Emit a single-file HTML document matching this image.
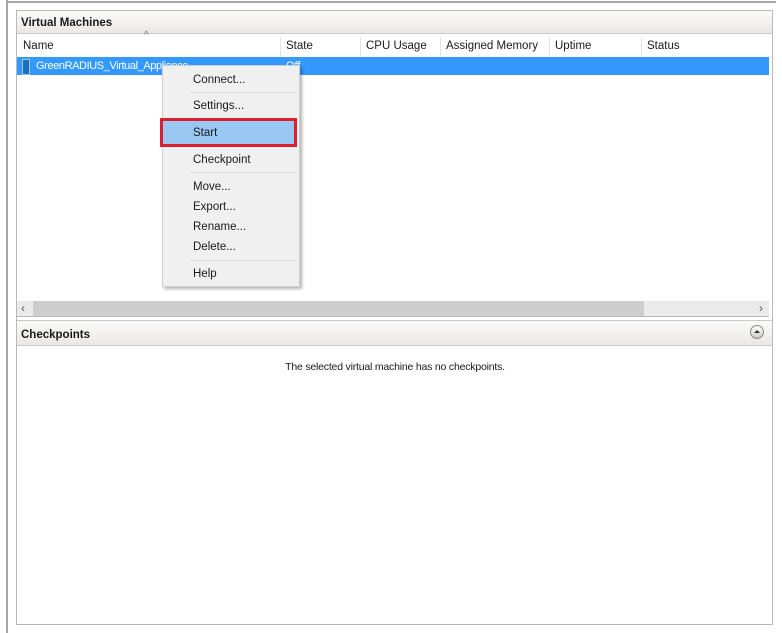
<!DOCTYPE html>
<html><head><style>
body{margin:0;width:782px;height:633px;background:#fff;position:relative;overflow:hidden;font-family:"Segoe UI","Liberation Sans",sans-serif;font-size:12px;color:#1a1a1a}
.a{position:absolute}
.hdr{background:linear-gradient(#fbfbfa,#e9e8e4);border-bottom:1px solid #c9c9c9;font-weight:bold;font-size:11.5px}
.col{position:absolute;top:37px;height:19px;line-height:19px;border-left:1px solid #e2e2e2;padding-left:5px;font-size:11.5px}
.mi{position:absolute;left:193px;font-size:11.5px}
.sep{position:absolute;left:190px;width:106px;height:1px;background:#dcdcdc}
</style></head><body>
<div class="a" style="left:6px;top:0;width:2px;height:633px;background:#a8a8a8"></div>
<div class="a" style="left:6px;top:1px;width:770px;height:2px;background:#a8a8a8"></div>
<div class="a" style="left:16px;top:10px;width:755px;height:613px;border:1px solid #b9b9b9;background:#fff"></div>
<div class="a hdr" style="left:17px;top:11px;width:755px;height:23px;line-height:25px;padding-left:4px;box-sizing:border-box">Virtual Machines</div>
<div class="a" style="left:17px;top:35px;width:755px;height:21px;background:#fff"></div>
<div class="col" style="left:17px;border:none;padding-left:6px">Name</div>
<div class="a" style="left:144px;top:30px;font-size:10px;color:#777">^</div>
<div class="col" style="left:280px">State</div>
<div class="col" style="left:360px">CPU Usage</div>
<div class="col" style="left:440px">Assigned Memory</div>
<div class="col" style="left:549px">Uptime</div>
<div class="col" style="left:641px">Status</div>
<div class="a" style="left:17px;top:57px;width:752px;height:18px;background:#3399ff"></div>
<div class="a" style="left:22px;top:59px;width:6px;height:14px;background:#1f6fc0;border:1px solid #9cd"></div>
<div class="a" style="left:36px;top:60px;color:#fff;font-size:11px;letter-spacing:-0.4px">GreenRADIUS_Virtual_Appliance</div>
<div class="a" style="left:286px;top:60px;color:#fff;font-size:11px">Off</div>
<div class="a" style="left:17px;top:301px;width:752px;height:16px;background:#eaeaea;border-bottom:1px solid #b9b9b9;box-sizing:border-box"></div>
<div class="a" style="left:33px;top:301px;width:611px;height:15px;background:#cdcdcd"></div>
<div class="a" style="left:21px;top:301px;font-size:12px;color:#555">&lsaquo;</div>
<div class="a" style="left:759px;top:301px;font-size:12px;color:#555">&rsaquo;</div>
<div class="a hdr" style="left:17px;top:320px;width:755px;height:26px;line-height:28px;padding-left:4px;box-sizing:border-box;border-top:1px solid #c9c9c9">Checkpoints</div>
<div class="a" style="left:750px;top:325px;width:14px;height:14px;border-radius:50%;border:1px solid #888;background:linear-gradient(#fff,#ccc);box-sizing:border-box"></div>
<div class="a" style="left:754px;top:330px;width:0;height:0;border-left:3px solid transparent;border-right:3px solid transparent;border-bottom:3px solid #333"></div>
<div class="a" style="left:0;width:782px;top:361px;text-align:center;font-family:'Liberation Sans',sans-serif;font-size:10.5px;padding-left:4px;letter-spacing:-0.2px">The selected virtual machine has no checkpoints.</div>
<div class="a" style="left:162px;top:65px;width:138px;height:222px;background:#f0f0f0;border:1px solid #cfcfcf;box-sizing:border-box;box-shadow:2px 2px 3px rgba(0,0,0,.3)"></div>
<div class="mi" style="top:74px">Connect...</div>
<div class="sep" style="top:92px"></div>
<div class="mi" style="top:100px">Settings...</div>
<div class="a" style="left:160px;top:118px;width:137px;height:29px;border:3px solid #dc1f2e;box-sizing:border-box;background:#99c9f3"></div>
<div class="mi" style="top:127px">Start</div>
<div class="mi" style="top:154px">Checkpoint</div>
<div class="sep" style="top:172px"></div>
<div class="mi" style="top:181px">Move...</div>
<div class="mi" style="top:201px">Export...</div>
<div class="mi" style="top:221px">Rename...</div>
<div class="mi" style="top:241px">Delete...</div>
<div class="sep" style="top:260px"></div>
<div class="mi" style="top:268px">Help</div>
</body></html>
